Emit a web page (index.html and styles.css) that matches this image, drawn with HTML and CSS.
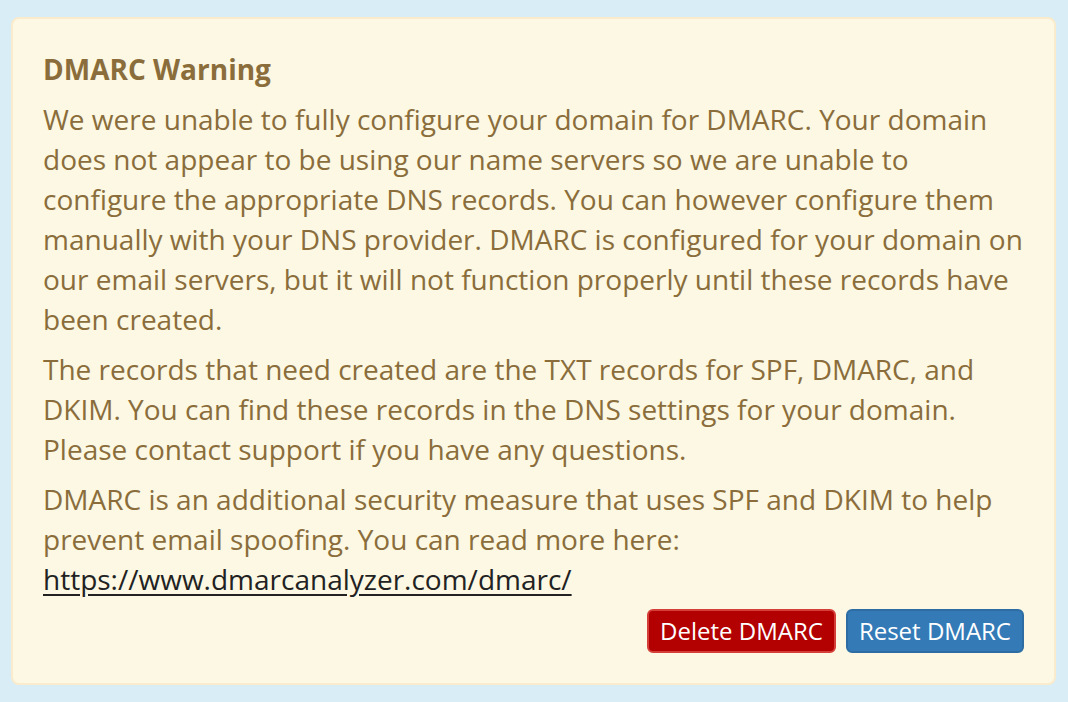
FILE: index.html
```html
<!DOCTYPE html>
<html lang="en">
<head>
	<meta charset="UTF-8">
	<meta name="viewport" content="width=device-width, initial-scale=1.0">
	<title>DMARC Warning</title>
	<link rel="stylesheet" href="styles.css">
</head>
<body>

<div class="alert alert-warning">
	<p class="alertTitle"><strong>DMARC Warning</strong></p>
	<p>We were unable to fully configure your domain for DMARC. Your domain does not appear to be using our name servers so we are unable to configure the appropriate DNS records. You can however configure them manually with your DNS provider. DMARC is configured for your domain on our email servers, but it will not function properly until these records have been created.</p>
	<p>The records that need created are the TXT records for SPF, DMARC, and DKIM. You can find these records in the DNS settings for your domain. Please contact support if you have any questions.</p>
	<p>DMARC is an additional security measure that uses SPF and DKIM to help prevent email spoofing. You can read more here: <a href="#">https://www.dmarcanalyzer.com/dmarc/</a></p>
	<div class="actions">
		<button type="button" class="btn btn-delete">Delete DMARC</button>
		<button type="button" class="btn btn-reset">Reset DMARC</button>
	</div>
</div>

</body>
</html>
```
FILE: styles.css
```css
html, body {
	margin: 0;
	height: 100%;
}

body {
	font-family: "Open Sans", "Liberation Sans", sans-serif;
	font-size: 28px;
	line-height: 40px;
	background-color: #d9edf7;
	padding: 17px 12px 0 11px;
	box-sizing: border-box;
}

.alert {
	padding: 30px;
	border: 2px solid #faebcc;
	border-radius: 8px;
	background-color: #fcf8e3;
	color: #8a6d3b;
}

.alert p {
	margin: 0 0 10px 0;
}

.alertTitle strong {
	font-weight: 700;
}

.alert a {
	color: #222;
	text-decoration: underline;
	text-underline-offset: 4px;
}

.actions {
	display: flex;
	justify-content: flex-end;
	gap: 10px;
	margin-top: 0;
}

.btn {
	font-family: inherit;
	font-size: 24px;
	line-height: 36px;
	padding: 2px 11px;
	border: 2px solid;
	border-radius: 6px;
	color: #fff;
	cursor: pointer;
}

.btn-delete {
	background-color: #b30000;
	border-color: #d43f3a;
}

.btn-reset {
	background-color: #337ab7;
	border-color: #2e6da4;
}
```
